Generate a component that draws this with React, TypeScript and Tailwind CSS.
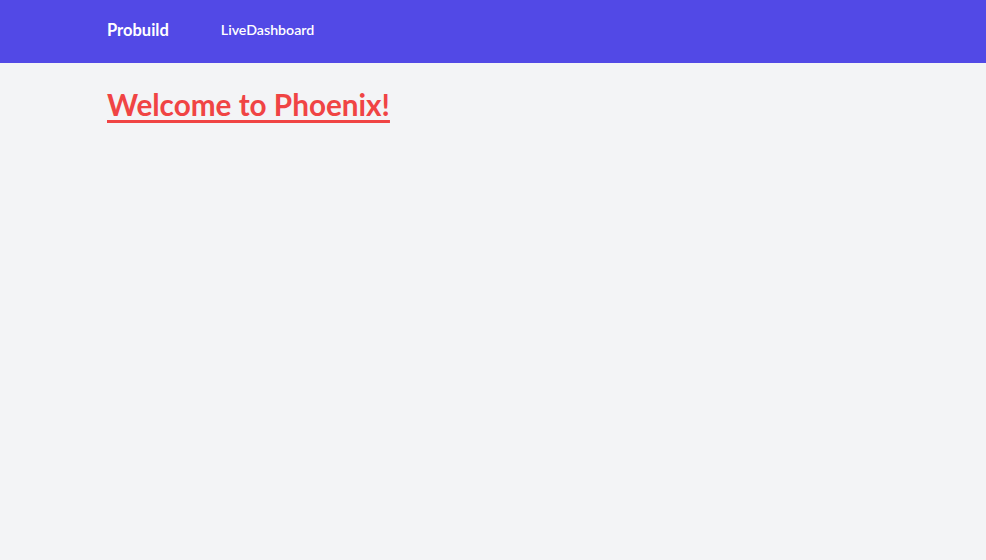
export default function App() {
  return (
    <div
      className="min-h-screen bg-[#f3f4f6]"
      style={{ fontFamily: "Lato, 'Open Sans', sans-serif" }}
    >
      {/* NAV */}
      <header className="h-[63px] bg-[#5249e6]">
        <nav className="mx-auto flex h-full max-w-[772px] items-center gap-[52px] pb-[3px]">
          <a className="text-[16.5px] font-bold text-white">Probuild</a>
          <a className="text-[14.2px] font-semibold text-white">LiveDashboard</a>
        </nav>
      </header>

      {/* MAIN */}
      <main className="mx-auto max-w-[772px] pt-[22px]">
        <h1 className="text-[29.7px] font-bold leading-[40px] text-[#f04444] underline decoration-[3px] underline-offset-[4px]">
          Welcome to Phoenix!
        </h1>
      </main>
    </div>
  );
}
